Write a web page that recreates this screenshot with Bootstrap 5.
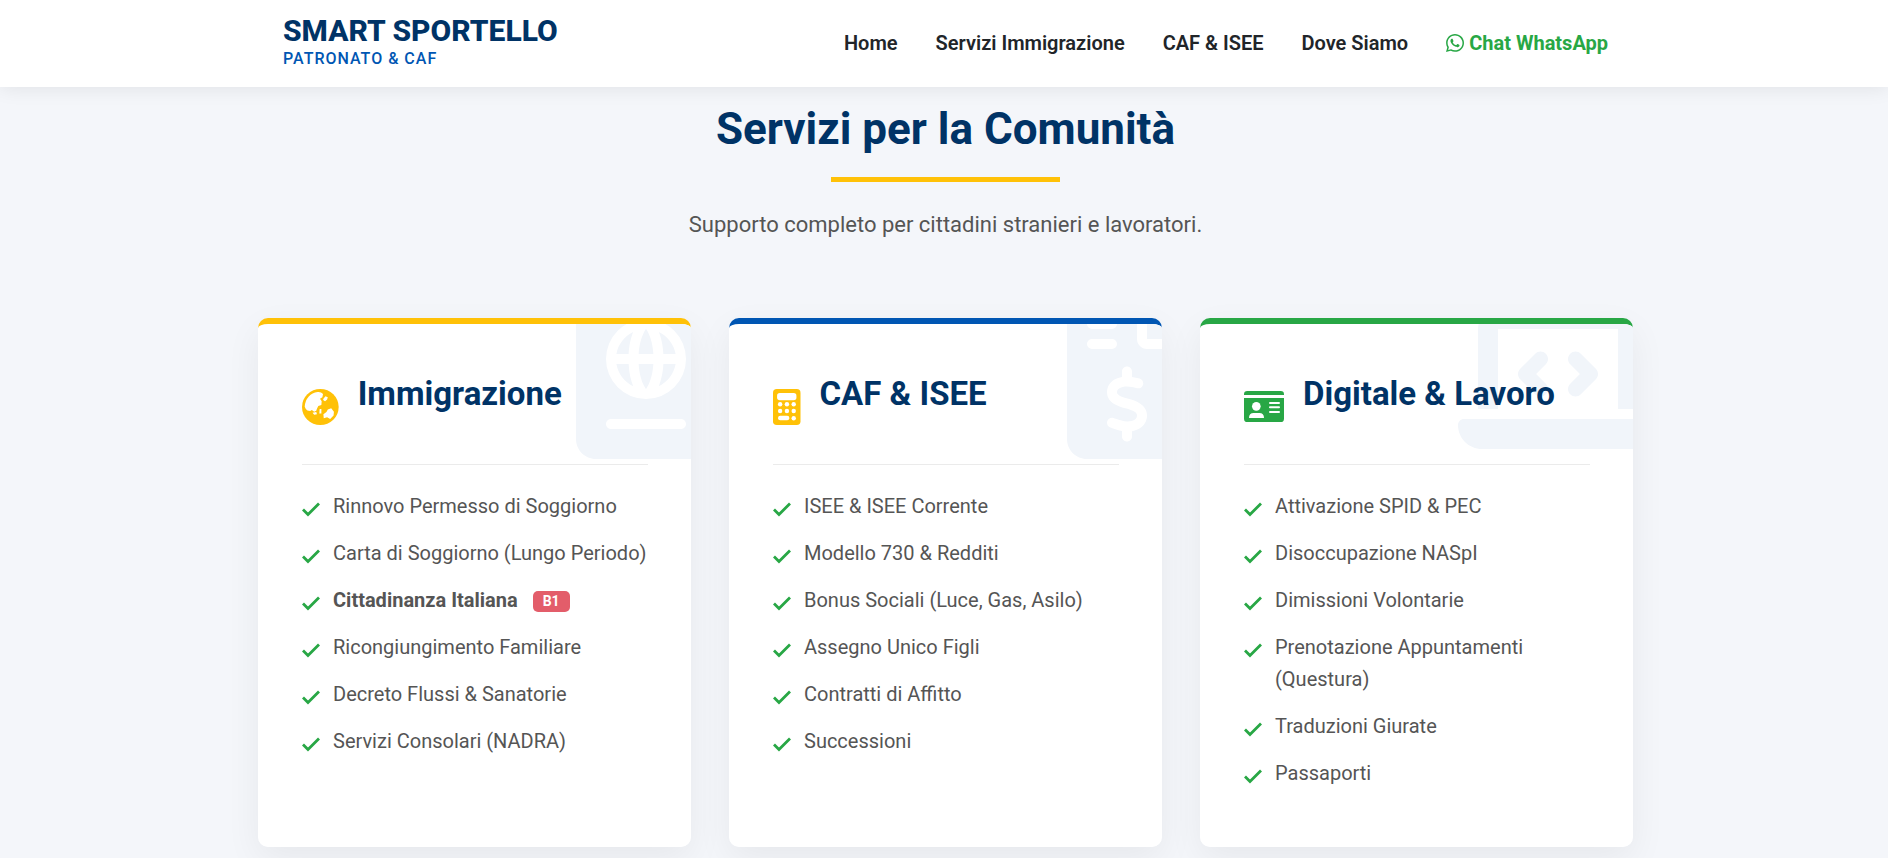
<!DOCTYPE html>
<html lang="it">
<head>
<meta charset="utf-8">
<meta name="viewport" content="width=device-width, initial-scale=1">
<title>Smart Sportello - Patronato &amp; CAF</title>
<link href="https://cdn.jsdelivr.net/npm/bootstrap@5.3.0/dist/css/bootstrap.min.css" rel="stylesheet">
<style>
  :root { --navy: #003366; --blue: #0056b3; --gold: #ffc107; --green: #28a745; --ink: #212529; --soft: #555; }
  body { font-family: Roboto, sans-serif; background: #f4f6fa; color: var(--soft); font-size: 20px; line-height: 32px; }
  .wrap { max-width: 1400px; padding: 0 11px 11px 14px; }
  .site-header { background: #fff; box-shadow: 0 2px 18px rgba(0,0,0,.08); position: relative; z-index: 5; }
  .bar { max-width: 1350px; padding: 15px 11px 17px 14px; }
  .brand { color: var(--navy); font-size: 30px; line-height: 32px; font-weight: 800; text-decoration: none; }
  .brand-sub { color: var(--blue); font-size: 16px; line-height: 23px; font-weight: 500; letter-spacing: 1px; }
  .main-nav { gap: 38px; }
  .main-nav a { color: var(--ink); font-size: 20px; line-height: 32px; font-weight: 600; text-decoration: none; padding: 0; }
  .main-nav a.chat { color: var(--green); gap: 5px; font-weight: 700; }
  .intro { padding: 13px 0 76px; }
  .intro h2 { color: var(--navy); font-size: 44px; line-height: 58px; font-weight: 700; margin: 0; }
  .rule { display: block; width: 50%; height: 5px; background: var(--gold); margin: 19px auto 0; }
  .intro p { font-size: 22px; line-height: 34px; margin: 26px 0 0; }
  .cards { --bs-gutter-x: 38px; --bs-gutter-y: 38px; }
  .service { position: relative; overflow: hidden; height: 100%; background: #fff; border-top: 6px solid var(--tone); border-radius: 10px; padding: 43px 43px 43px 44px; }
  .shade { border-radius: 10px; height: 100%; box-shadow: 0 12px 36px rgba(0,0,0,.06); }
  .mark-bg { position: absolute; top: -25px; right: -25px; height: 160px; fill: #f1f5fa; }
  .service-head { position: relative; border-bottom: 1px solid #ebebeb; gap: 19px; margin-bottom: 25px; min-height: 98px; }
  .service-head svg { height: 36px; margin-top: 22px; fill: var(--icon); }
  .service-head h3 { color: var(--navy); font-size: 33px; line-height: 38px; font-weight: 700; margin: 8px 0 0; }
  .service li { display: flex; gap: 13px; margin-bottom: 15px; }
  .service li > svg { flex: none; width: 18px; height: 18px; margin-top: 10px; }
  .tag { background: #e35d6a; font-size: 14px; line-height: 13px; padding: 4px 10px; border-radius: 5px; margin-left: 15px; vertical-align: 1px; }
</style>
</head>
<body>
<svg class="d-none"><symbol id="tick" viewBox="0 0 18 18"><path d="M1 9.500 L6 14.500 L17 3.500" fill="none" stroke="#28a745" stroke-width="2.800"/></symbol></svg>

<header class="site-header">
  <div class="container-fluid bar d-flex justify-content-between align-items-center">
    <a href="#" class="brand">SMART SPORTELLO<span class="brand-sub d-block">PATRONATO &amp; CAF</span></a>
    <nav class="main-nav nav">
      <a class="nav-link" href="#">Home</a>
      <a class="nav-link" href="#">Servizi Immigrazione</a>
      <a class="nav-link" href="#">CAF &amp; ISEE</a>
      <a class="nav-link" href="#">Dove Siamo</a>
      <a class="nav-link chat d-flex align-items-center" href="#"><svg width="18" height="18" viewBox="0 32 448 448" fill="currentColor"><path d="M380.900 97.100C339 55.100 283.200 32 223.900 32c-122.400 0-222 99.600-222 222 0 39.100 10.200 77.300 29.600 111L0 480l117.700-30.900c32.400 17.700 68.900 27 106.100 27h.1c122.300 0 224.100-99.600 224.100-222 0-59.300-25.200-115-67.100-157zm-157 341.600c-33.200 0-65.700-8.900-94-25.700l-6.700-4-69.800 18.300L72 359.200l-4.400-7c-18.500-29.400-28.200-63.300-28.200-98.200 0-101.700 82.800-184.500 184.600-184.500 49.300 0 95.600 19.200 130.400 54.100 34.800 34.900 56.200 81.200 56.100 130.500 0 101.800-84.900 184.600-186.600 184.600zm101.200-138.200c-5.500-2.800-32.800-16.200-37.900-18-5.100-1.900-8.800-2.800-12.500 2.800-3.700 5.600-14.300 18-17.600 21.800-3.200 3.700-6.500 4.200-12 1.400-32.600-16.300-54-29.100-75.500-66-5.700-9.800 5.700-9.100 16.300-30.300 1.800-3.700.9-6.900-.5-9.700-1.400-2.800-12.500-30.100-17.100-41.200-4.500-10.800-9.100-9.300-12.500-9.500-3.200-.2-6.900-.2-10.600-.2-3.700 0-9.700 1.400-14.800 6.900-5.100 5.600-19.400 19-19.400 46.300 0 27.300 19.900 53.700 22.600 57.400 2.800 3.700 39.100 59.700 94.800 83.800 35.200 15.200 49 16.500 66.600 13.900 10.700-1.600 32.800-13.400 37.400-26.400 4.600-13 4.600-24.100 3.200-26.400-1.300-2.500-5-3.900-10.500-6.600z"/></svg>Chat WhatsApp</a>
    </nav>
  </div>
</header>

<main class="container-fluid wrap">
  <div class="intro text-center">
    <div class="d-inline-block"><h2>Servizi per la Comunità</h2><span class="rule"></span></div>
    <p>Supporto completo per cittadini stranieri e lavoratori.</p>
  </div>

  <div class="row cards row-cols-1 row-cols-lg-3">
    <div class="col"><div class="shade"><section class="service" style="--tone:var(--gold);--icon:var(--gold)">
      <svg class="mark-bg" viewBox="0 0 448 512"><path fill-rule="evenodd" d="M0 64C0 28.700 28.700 0 64 0H384c35.300 0 64 28.700 64 64V448c0 35.300-28.700 64-64 64H64c-35.300 0-64-28.700-64-64V64zM352 192A128 128 0 1 0 96 192a128 128 0 1 0 256 0zM112 384c-8.800 0-16 7.200-16 16s7.200 16 16 16H336c8.800 0 16-7.200 16-16s-7.200-16-16-16H112zM183 278.800c-27.900-13.200-48.400-39.400-53.700-70.800h39.100c1.600 30.400 7.700 53.800 14.600 70.800zM224.300 288h-.6c-2.400-3.500-5.700-8.900-9.100-16.500c-6-13.600-12.400-34.300-14.200-63.500h47.100c-1.800 29.200-8.100 49.900-14.200 63.500c-3.400 7.600-6.700 13-9.100 16.500zM265 278.800c6.800-17.100 12.900-40.400 14.600-70.800h39.100c-5.300 31.400-25.800 57.600-53.700 70.800zM279.600 176c-1.600-30.400-7.700-53.800-14.600-70.800c27.900 13.200 48.400 39.400 53.700 70.800H279.600zM223.700 96h.6c2.400 3.500 5.700 8.900 9.100 16.500c6 13.600 12.400 34.300 14.200 63.500H200.500c1.800-29.200 8.100-49.900 14.200-63.500c3.400-7.600 6.700-13 9.100-16.500zM183 105.200c-6.800 17.100-12.900 40.400-14.600 70.800H129.300c5.300-31.400 25.800-57.600 53.700-70.800z"/></svg>
      <div class="service-head d-flex align-items-start"><svg viewBox="18 24 108 106"><ellipse cx="72" cy="77" rx="54" ry="53"/><g fill="#fff"><path d="M26 76Q27 58 38 46Q48 35 64 33Q74 32 80 39L78 48L71 53L76 60L75 71L66 74L62 82L60 88L54 91L47 86L42 89L34 87Q28 83 26 76Z"/><path d="M80 54L87 45L94 48L92 55L86 60L82 58Z"/><path d="M49 94L60 92L62 98L54 100Z"/><path d="M70 83H75V96H69Z"/><path d="M81 98L90 92L94 84L104 81L112 91L111 102L101 112L92 107L82 110Z"/></g></svg><h3>Immigrazione</h3></div>
      <ul class="list-unstyled mb-0">
        <li><svg><use href="#tick"/></svg><span>Rinnovo Permesso di Soggiorno</span></li>
        <li><svg><use href="#tick"/></svg><span>Carta di Soggiorno (Lungo Periodo)</span></li>
        <li><svg><use href="#tick"/></svg><span><strong>Cittadinanza Italiana</strong><span class="badge tag">B1</span></span></li>
        <li><svg><use href="#tick"/></svg><span>Ricongiungimento Familiare</span></li>
        <li><svg><use href="#tick"/></svg><span>Decreto Flussi &amp; Sanatorie</span></li>
        <li><svg><use href="#tick"/></svg><span>Servizi Consolari (NADRA)</span></li>
      </ul>
    </section></div></div>

    <div class="col"><div class="shade"><section class="service" style="--tone:var(--blue);--icon:var(--gold)">
      <svg class="mark-bg" viewBox="0 0 384 512"><path fill-rule="evenodd" d="M64 0C28.700 0 0 28.700 0 64V448c0 35.300 28.700 64 64 64H320c35.300 0 64-28.700 64-64V160H256c-17.700 0-32-14.300-32-32V0H64zM256 0V128H384L256 0zM80 64h64a16 16 0 0 1 0 32H80a16 16 0 0 1 0-32zM80 128h64a16 16 0 0 1 0 32H80a16 16 0 0 1 0-32zM192 216c8.800 0 16 7.200 16 16v17.300c8.500 1.200 16.700 3.100 24.100 5.100c8.500 2.300 13.600 11 11.300 19.600s-11 13.600-19.600 11.300c-11.100-3-22-5.200-32.100-5.300c-8.400-.1-17.400 1.800-23.600 5.500c-5.700 3.400-8.100 7.300-8.100 12.800c0 3.700 1.300 6.500 7.300 10.100c6.900 4.100 16.600 7.100 29.200 10.900l.5 .1c11.300 3.400 25.300 7.600 36.300 14.600c12.100 7.600 22.400 19.700 22.700 38.200c.3 19.300-9.600 33.300-22.900 41.600c-7.700 4.800-16.400 7.600-25.100 9.100V440c0 8.800-7.200 16-16 16s-16-7.200-16-16V422.200c-11.200-2.100-21.700-5.700-30.900-8.900c-2.100-.7-4.200-1.400-6.200-2.100c-8.400-2.800-12.900-11.900-10.100-20.200s11.900-12.900 20.200-10.100c2.500 .8 4.800 1.600 7.100 2.400c13.600 4.600 24.600 8.400 36.300 8.700c9.100 .3 17.900-1.700 23.700-5.300c5.100-3.200 7.900-7.300 7.800-14c-.1-4.600-1.800-7.800-7.700-11.600c-6.800-4.300-16.500-7.400-29-11.200l-1.600-.5c-11-3.300-24.300-7.300-34.800-13.700c-12-7.200-22.600-18.900-22.700-37.300c-.1-19.400 10.800-32.800 23.800-40.500c7.500-4.400 15.800-7.200 24.100-8.700V232c0-8.800 7.200-16 16-16z"/></svg>
      <div class="service-head d-flex align-items-start"><svg viewBox="21 24 81 106"><rect x="21" y="24" width="81" height="106" rx="11"/><g fill="#fff"><rect x="33" y="36" width="57" height="21" rx="8"/><circle cx="42" cy="69" r="6.500"/><circle cx="62" cy="69" r="6.500"/><circle cx="82" cy="69" r="6.500"/><circle cx="42" cy="89" r="6.500"/><circle cx="62" cy="89" r="6.500"/><circle cx="82" cy="89" r="6.500"/><rect x="36" y="103" width="33" height="13" rx="6"/><circle cx="82" cy="110" r="6.500"/></g></svg><h3>CAF &amp; ISEE</h3></div>
      <ul class="list-unstyled mb-0">
        <li><svg><use href="#tick"/></svg><span>ISEE &amp; ISEE Corrente</span></li>
        <li><svg><use href="#tick"/></svg><span>Modello 730 &amp; Redditi</span></li>
        <li><svg><use href="#tick"/></svg><span>Bonus Sociali (Luce, Gas, Asilo)</span></li>
        <li><svg><use href="#tick"/></svg><span>Assegno Unico Figli</span></li>
        <li><svg><use href="#tick"/></svg><span>Contratti di Affitto</span></li>
        <li><svg><use href="#tick"/></svg><span>Successioni</span></li>
      </ul>
    </section></div></div>

    <div class="col"><div class="shade"><section class="service" style="--tone:var(--green);--icon:var(--green)">
      <svg class="mark-bg" viewBox="0 0 640 512"><path d="M64 96c0-35.300 28.700-64 64-64H512c35.300 0 64 28.700 64 64V352H512V96H128V352H64V96zM0 403.200C0 392.600 8.600 384 19.200 384H620.800c10.600 0 19.200 8.600 19.200 19.200c0 42.400-34.400 76.800-76.800 76.800H76.800C34.400 480 0 445.600 0 403.200zM281 209l-31 31 31 31c9.400 9.400 9.400 24.600 0 33.900s-24.600 9.400-33.900 0l-48-48c-9.400-9.400-9.400-24.600 0-33.900l48-48c9.400-9.400 24.600-9.400 33.900 0s9.400 24.600 0 33.900zM393 175l48 48c9.400 9.400 9.400 24.600 0 33.900l-48 48c-9.400 9.400-24.600 9.400-33.900 0s-9.400-24.600 0-33.900l31-31-31-31c-9.400-9.400-9.400-24.600 0-33.900s24.600-9.400 33.900 0z"/></svg>
      <div class="service-head d-flex align-items-start"><svg viewBox="21 24 120 108"><path d="M31 30H131Q141 30 141 40V42H21V40Q21 30 31 30Z"/><path d="M21 51H141V113Q141 123 131 123H31Q21 123 21 113Z"/><g fill="#fff"><circle cx="58" cy="76" r="13"/><path d="M36 111Q36 96 50 96H67Q81 96 81 111Z"/><rect x="96" y="63" width="33" height="6" rx="3"/><rect x="96" y="76" width="33" height="6" rx="3"/><rect x="96" y="90" width="33" height="6" rx="3"/></g></svg><h3>Digitale &amp; Lavoro</h3></div>
      <ul class="list-unstyled mb-0">
        <li><svg><use href="#tick"/></svg><span>Attivazione SPID &amp; PEC</span></li>
        <li><svg><use href="#tick"/></svg><span>Disoccupazione NASpI</span></li>
        <li><svg><use href="#tick"/></svg><span>Dimissioni Volontarie</span></li>
        <li><svg><use href="#tick"/></svg><span>Prenotazione Appuntamenti (Questura)</span></li>
        <li><svg><use href="#tick"/></svg><span>Traduzioni Giurate</span></li>
        <li><svg><use href="#tick"/></svg><span>Passaporti</span></li>
      </ul>
    </section></div></div>
  </div>
</main>
<script src="https://cdn.jsdelivr.net/npm/bootstrap@5.3.0/dist/js/bootstrap.bundle.min.js"></script>
</body>
</html>
